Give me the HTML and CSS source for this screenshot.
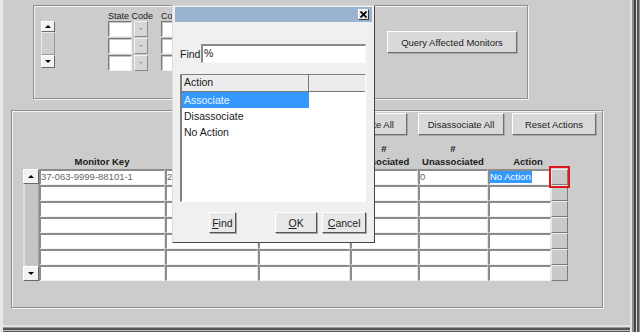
FILE: index.html
```html
<!DOCTYPE html>
<html lang="en">
<head>
  <meta charset="UTF-8" />
  <title>Associate Monitors</title>
  <link rel="stylesheet" href="styles.css">
</head>
<body>

<div class="window">

  <div class="top-frame">
    <div class="vscroll small">
      <div class="arrow-btn up"></div>
      <div class="track"></div>
      <div class="arrow-btn down"></div>
    </div>

    <div class="group state">
      <div class="group-label">State Code</div>
      <div class="combo"><div class="field"></div><div class="drop"></div></div>
      <div class="combo"><div class="field"></div><div class="drop"></div></div>
      <div class="combo"><div class="field"></div><div class="drop"></div></div>
    </div>

    <div class="group county">
      <div class="group-label">County Code</div>
      <div class="combo"><div class="field wide"></div><div class="drop"></div></div>
      <div class="combo"><div class="field wide"></div><div class="drop"></div></div>
      <div class="combo"><div class="field wide"></div><div class="drop"></div></div>
    </div>

    <div class="btn query">Query Affected Monitors</div>
  </div>

  <div class="bottom-frame">
    <div class="actions">
      <div class="btn assoc">Associate All</div>
      <div class="btn disassoc">Disassociate All</div>
      <div class="btn reset">Reset Actions</div>
    </div>

    <div class="heads">
      <div></div>
      <div>Monitor Key</div>
      <div>Site Name</div>
      <div>Parameter</div>
      <div>#<br>Associated</div>
      <div>#<br>Unassociated</div>
      <div>Action</div>
    </div>

    <div class="rows">
      <div class="vscroll grid-scroll">
        <div class="arrow-btn up"></div>
        <div class="track"></div>
        <div class="arrow-btn down"></div>
      </div>

      <div class="cell">37-063-9999-88101-1</div>
      <div class="cell">2</div>
      <div class="cell"></div>
      <div class="cell"></div>
      <div class="cell">0</div>
      <div class="cell"><span class="selected">No Action</span></div>
      <div class="rbtn"></div>

      <div class="cell"></div><div class="cell"></div><div class="cell"></div><div class="cell"></div><div class="cell"></div><div class="cell"></div><div class="rbtn"></div>
      <div class="cell"></div><div class="cell"></div><div class="cell"></div><div class="cell"></div><div class="cell"></div><div class="cell"></div><div class="rbtn"></div>
      <div class="cell"></div><div class="cell"></div><div class="cell"></div><div class="cell"></div><div class="cell"></div><div class="cell"></div><div class="rbtn"></div>
      <div class="cell"></div><div class="cell"></div><div class="cell"></div><div class="cell"></div><div class="cell"></div><div class="cell"></div><div class="rbtn"></div>
      <div class="cell"></div><div class="cell"></div><div class="cell"></div><div class="cell"></div><div class="cell"></div><div class="cell"></div><div class="rbtn"></div>
      <div class="cell"></div><div class="cell"></div><div class="cell"></div><div class="cell"></div><div class="cell"></div><div class="cell"></div><div class="rbtn"></div>
    </div>
  </div>

  <!-- focused row button -->
  <div class="focus-ring"></div>

  <!-- list of values popup -->
  <div class="dialog">
    <div class="titlebar">
      <div class="close">
        <svg width="7" height="7" viewBox="0 0 7 7"><path d="M0.5 0.5L6.5 6.5M6.5 0.5L0.5 6.5" stroke="#000" stroke-width="1.7"/></svg>
      </div>
    </div>
    <div class="dlg-body">
      <div class="find-row">
        <span class="find-label">Find</span>
        <div class="find-input">%</div>
      </div>
      <div class="list">
        <div class="list-head">
          <div class="lh first">Action</div>
          <div class="lh rest"></div>
        </div>
        <div class="item active">Associate</div>
        <div class="item">Disassociate</div>
        <div class="item">No Action</div>
      </div>
      <div class="dlg-buttons">
        <div class="btn dlg find-btn"><u>F</u>ind</div>
        <div class="btn dlg ok-btn"><u>O</u>K</div>
        <div class="btn dlg cancel-btn"><u>C</u>ancel</div>
      </div>
    </div>
  </div>

</div>

</body>
</html>
```

FILE: styles.css
```css
* { box-sizing: border-box; margin: 0; padding: 0; }

html, body {
  width: 640px;
  height: 332px;
  overflow: hidden;
  background: #cccccc;
  font-family: "Liberation Sans", Arial, sans-serif;
  font-size: 9.5px;
  color: #1a1a1a;
}

.window {
  position: relative;
  width: 640px;
  height: 332px;
  padding-top: 5px;
  box-shadow:
    inset 3px 0 0 #e3e8ee,
    inset -1px 0 0 #999, inset -3px 0 0 #555, inset -4px 0 0 #ddd,
    inset -6px 0 0 #444, inset -8px 0 0 #8a8a8a, inset -10px 0 0 #e2e2e2,
    inset 0 -1px 0 #555, inset 0 -2px 0 #bbb, inset 0 -4px 0 #555,
    inset 0 -5px 0 #999, inset 0 -7px 0 #e2e2e2;
}

/* etched group frames */
.top-frame, .bottom-frame {
  border: 1px solid #8e8e8e;
  box-shadow: 1px 1px 0 #f4f4f4, inset 1px 1px 0 #f4f4f4;
}

.top-frame {
  margin-left: 33px;
  width: 495px;
  height: 94px;
  display: flex;
  align-items: flex-start;
}

.bottom-frame {
  margin: 11px 0 0 11px;
  width: 592px;
  height: 198px;
  display: flex;
  flex-direction: column;
}

/* scrollbars */
.vscroll { display: flex; flex-direction: column; }
.vscroll.small { margin: 15px 0 0 7px; width: 14px; height: 47px; }

.arrow-btn {
  background: #f2f2f2;
  border: 1px solid;
  border-color: #fff #6a6a6a #6a6a6a #fff;
  display: flex;
  align-items: center;
  justify-content: center;
}
.small .arrow-btn.up { height: 11px; }
.small .arrow-btn.down { height: 13px; }
.arrow-btn::before {
  content: '';
  border-left: 3px solid transparent;
  border-right: 3px solid transparent;
}
.arrow-btn.up::before { border-bottom: 3px solid #000; }
.arrow-btn.down::before { border-top: 3px solid #000; }

.track {
  flex: 1;
  background: #cdcdcd;
  border-left: 1px solid #e8e8e8;
  border-right: 1px solid #a0a0a0;
}
.small .track { border: 1px solid; border-color: #e8e8e8 #999 #999 #e8e8e8; }

.grid-scroll { grid-row: 1 / 8; }
.grid-scroll .arrow-btn { height: 15px; }
.grid-scroll .track { background: #c6c6c6; border-left: 2px solid #dedede; }

/* top frame fields */
.group { margin-top: 5px; }
.state { margin-left: 53px; width: 40px; }
.county { margin-left: 13px; }

.group-label {
  height: 10px;
  line-height: 10px;
  font-size: 9px;
  white-space: nowrap;
}

.combo {
  display: flex;
  gap: 2px;
  height: 16px;
  margin-bottom: 1px;
}

.field {
  width: 24px;
  background: #fff;
  border: 1px solid;
  border-color: #7a7a7a #f0f0f0 #f0f0f0 #7a7a7a;
  box-shadow: inset 1px 1px 0 #c4c4c4;
}
.field.wide { width: 40px; }

.drop {
  width: 14px;
  background: #d6d6d6;
  border: 1px solid;
  border-color: #f2f2f2 #8a8a8a #8a8a8a #f2f2f2;
  display: flex;
  align-items: center;
  justify-content: center;
}
.drop::before {
  content: '';
  border-left: 2px solid transparent;
  border-right: 2px solid transparent;
  border-top: 2px solid #999;
}

/* buttons */
.btn {
  display: flex;
  align-items: center;
  justify-content: center;
  background: #d9d9d9;
  border: 1px solid;
  border-color: #fff #6e6e6e #6e6e6e #fff;
  box-shadow: 1px 1px 0 #a8a8a8;
  color: #222;
  white-space: nowrap;
}

.query {
  margin: 25px 10px 0 auto;
  width: 130px;
  height: 22px;
}

.actions {
  display: flex;
  justify-content: flex-end;
  margin: 2px 6px 0 0;
}
.actions .btn { height: 22px; }
.assoc { width: 80px; margin-right: 11px; }
.disassoc { width: 86px; margin-right: 8px; }
.reset { width: 84px; }

/* grid */
.heads, .rows { margin-left: 11px; display: grid; }

.heads {
  grid-template-columns: 16px 126px 93px 92px 68px 70px 80px;
  margin-top: 7px;
  height: 26px;
  align-items: end;
  text-align: center;
  font-weight: bold;
  line-height: 13px;
  white-space: nowrap;
}

.rows {
  margin-top: 1px;
  grid-template-columns: 16px 126px 93px 92px 68px 70px 63px 17px;
  grid-auto-rows: 16px;
}

.cell {
  background: #fff;
  border-top: 2px solid #8c8c8c;
  border-left: 2px solid #8c8c8c;
  border-right: 1px solid #e4e4e4;
  border-bottom: 1px solid #f2f2f2;
  line-height: 12px;
  color: #666;
  white-space: nowrap;
  overflow: hidden;
}

.selected {
  background: #3399ff;
  color: #fff;
  padding: 0 1px 1px 0;
}

.rbtn {
  background: #c9c9c9;
  border: 1px solid;
  border-color: #ececec #7a7a7a #7a7a7a #ececec;
}

.focus-ring {
  position: absolute;
  left: 549px;
  top: 166px;
  width: 21px;
  height: 22px;
  border: 2px solid #e0161e;
}

/* popup dialog */
.dialog {
  position: absolute;
  left: 172px;
  top: 5px;
  width: 203px;
  height: 238px;
  background: #f0f0f0;
  border: 1px solid;
  border-color: #dcdcdc #444 #444 #dcdcdc;
  padding: 1px 2px;
  font-size: 10.5px;
  color: #1a1a1a;
}

.titlebar {
  height: 15px;
  background: #99b4d1;
  display: flex;
  align-items: center;
  justify-content: flex-end;
  padding-right: 3px;
}

.close {
  width: 11px;
  height: 11px;
  background: #e4e4e4;
  border: 1px solid;
  border-color: #fff #333 #333 #fff;
  display: flex;
  align-items: center;
  justify-content: center;
}

.dlg-body { padding: 0 6px 0 5px; }

.find-row {
  display: flex;
  align-items: center;
  margin-top: 22px;
  height: 19px;
}
.find-label { width: 21px; }
.find-input {
  flex: 1;
  height: 19px;
  background: #fff;
  border-top: 2px solid #8a8a8a;
  border-left: 2px solid #8a8a8a;
  border-right: 1px solid #fafafa;
  border-bottom: 1px solid #fafafa;
  padding-left: 1px;
  line-height: 15px;
}

.list {
  margin-top: 11px;
  height: 128px;
  background: #fff;
  border: 1px solid;
  border-color: #808080 #fff #fff #808080;
  border-left-width: 2px;
}

.list-head { display: flex; height: 17px; }
.lh {
  background: #ececec;
  border-right: 1px solid #777;
  border-bottom: 1px solid #777;
  line-height: 15px;
  padding-left: 2px;
}
.lh.first { width: 127px; }
.lh.rest { flex: 1; border-right: 0; }

.item {
  width: 127px;
  height: 16px;
  line-height: 16px;
  padding-left: 2px;
}
.item.active { background: #3399ff; color: #eaf4ff; }

.dlg-buttons { display: flex; margin-top: 10px; }
.btn.dlg { height: 21px; background: #e8e8e8; border-color: #fff #555 #555 #fff; }
.find-btn { width: 27px; margin-left: 29px; }
.ok-btn { width: 43px; margin-left: 39px; }
.cancel-btn { width: 44px; margin-left: 5px; }
```
